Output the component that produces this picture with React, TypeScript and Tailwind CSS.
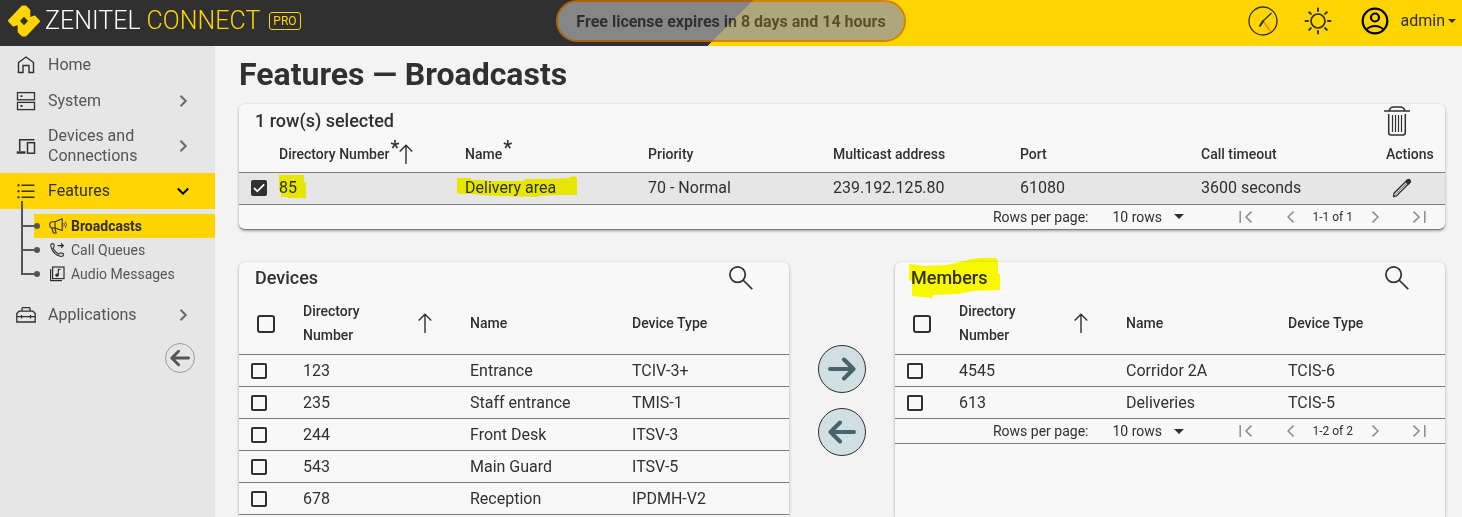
import React from "react";

type IconProps = { className?: string };

function Chevron({ className }: IconProps) {
  return (
    <svg className={className} viewBox="0 0 16 16" fill="none" stroke="currentColor" strokeWidth="2">
      <path d="M5.5 2.8 10.7 8l-5.2 5.2" />
    </svg>
  );
}

function BrandMark() {
  return (
    <svg className="size-8 shrink-0" viewBox="0 0 32 32" fill="#ffd500" fillRule="evenodd" stroke="#ffd500" strokeWidth="2" strokeLinejoin="round" aria-hidden="true">
      <path d="M1 15.800 14.500 1.500H17.500L21.300 5.300V13.500L26.600 11.500 31 16.200 17.500 30.500H14.500L10.700 26.700V18.500L5.400 20.500Z" />
      <path d="M16 11.800 20 16 16 20.200 12 16Z" fill="#303030" stroke="none" />
    </svg>
  );
}

function HomeIcon() {
  return (
    <svg className="size-5" viewBox="0 0 20 20" fill="none" stroke="#303030" strokeWidth="1.4">
      <path d="M2.500 7.500 10 2l7.500 5.500V17.500H13V10.500H7V17.500H2.500Z" />
    </svg>
  );
}

function SystemIcon() {
  return (
    <svg className="size-5" viewBox="0 0 20 20" fill="none" stroke="#303030" strokeWidth="1.3">
      <rect x="1.500" y="1.600" width="17" height="7.200" />
      <rect x="1.500" y="11.400" width="17" height="7.200" />
      <path d="M4.500 5.200h2M4.500 15h2" strokeWidth="1.800" />
    </svg>
  );
}

function DevicesIcon() {
  return (
    <svg className="size-5" viewBox="0 0 20 20" fill="none" stroke="#303030" strokeWidth="1.500">
      <path d="M3.700 15V3.700H18.500" />
      <path d="M.7 16.500H9.500" strokeWidth="2.400" />
      <rect x="11.500" y="6.700" width="7" height="10.500" />
    </svg>
  );
}

function ListIcon() {
  return (
    <svg className="size-5" viewBox="0 0 20 20" fill="none" stroke="#303030" strokeWidth="1.400">
      <path d="M5.500 4.200H18.500M5.500 10.200H18.500M5.500 16.200H18.500" />
      <path d="M1.500 4.200h2M1.500 10.200h2M1.500 16.200h2" strokeWidth="2" />
    </svg>
  );
}

function ToolboxIcon() {
  return (
    <svg className="size-5" viewBox="0 0 20 20" fill="none" stroke="#303030" strokeWidth="1.300">
      <path d="M6 6V3.500Q6 2.700 6.800 2.700H13.200Q14 2.700 14 3.500V6" />
      <path d="M3 6.200H17L19.200 8.600V17H.8V8.600Z" />
      <path d="M.8 11.700H19.200M5.500 10v3.400M14.500 10v3.400" />
    </svg>
  );
}

function MegaphoneIcon() {
  return (
    <svg className="h-4 w-[18px]" viewBox="0 0 18 16" fill="none" stroke="#303030" strokeWidth="1.100" strokeLinejoin="round">
      <path d="M6 3.700H3.200Q.7 4.200.7 6.800T3.200 10H6Z" />
      <path d="M6 3.700 13.200.8V12.600L6 10" />
      <path d="M2.800 10 4.500 15H7.200L5.800 10" />
      <path d="M14.800 5Q16 6.700 14.800 8.500M16.300 3.500Q18.500 6.700 16.300 10" strokeWidth=".8" />
    </svg>
  );
}

function CallQueueIcon() {
  return (
    <svg className="size-4" viewBox="0 0 16 16" fill="none" stroke="#303030" strokeWidth="1.100" strokeLinejoin="round">
      <path d="M2 2.300Q3.300 1 4.900 2.100L5.200 4.500 4 6.300Q6.300 10.300 9.800 12.200L11.300 10.800 14.300 11.600V13.800Q12 15.200 8.500 13.300 4 10.700 2.400 6 1.600 3.500 2 2.300Z" />
      <path d="M8.500 3.700h5.800M12 1.500l2.300 2.200-2.300 2.200" strokeWidth="1.300" />
    </svg>
  );
}

function AudioIcon() {
  return (
    <svg className="size-4" viewBox="0 0 16 16" fill="none" stroke="#303030" strokeWidth="1.200">
      <rect x="3.600" y="1" width="11.400" height="11.600" />
      <path d="M1.600 3V14.600H13" />
      <path d="M9.300 9V3.400H11.500" />
      <circle cx="8" cy="9.200" r="1.400" fill="#303030" strokeWidth=".6" />
    </svg>
  );
}

function SortArrow({ className = "" }: IconProps) {
  return (
    <svg className={`h-5 w-[14px] shrink-0 ${className}`} viewBox="0 0 14 20" fill="none" stroke="#303030" strokeWidth="1.400" aria-label="Sorted ascending">
      <path d="M7 20V1.200M.7 7.500 7 1.200l6.300 6.300" />
    </svg>
  );
}

function BoldArrow({ className = "" }: IconProps) {
  return (
    <svg className={className} viewBox="0 0 28 28" fill="none" stroke="currentColor" strokeWidth="4" strokeLinecap="round" strokeLinejoin="round">
      <path d="M2 14H25M16 4.500 25.500 14 16 23.500" />
    </svg>
  );
}

function SearchIcon() {
  return (
    <svg className="size-6" viewBox="0 0 24 24" fill="none" stroke="#303030" strokeWidth="1.700">
      <circle cx="8.600" cy="8.600" r="7.700" />
      <path d="M14 14 23.200 23.200" />
    </svg>
  );
}

function TrashIcon() {
  return (
    <svg className="h-[30px] w-[26px]" viewBox="0 0 26 30" fill="none" stroke="#303030" strokeWidth="1.500">
      <path d="M0 5H26M5 5Q6 1 10 1H16Q20 1 21 5" />
      <path d="M4.700 8V26.500Q4.700 29 7 29H19Q21.300 29 21.300 26.500V8" />
      <path d="M8.500 9V26M11.500 9V26M14.500 9V26M17.500 9V26" strokeWidth="1.200" />
    </svg>
  );
}

function PencilIcon() {
  return (
    <svg className="size-5" viewBox="0 0 20 20" fill="none" stroke="#303030" strokeWidth="1.300" strokeLinejoin="round">
      <path d="M1.500 18.500 2 15.300 15 2.300 17.500 4.800 4.500 17.900Z" />
      <path d="M14 3.500 15.700 1.700Q16.600 1 17.500 1.800L18.200 2.500Q19 3.400 18.200 4.300L16.500 6Z" fill="#303030" />
      <path d="M3.500 16.300 15 5" strokeWidth=".6" />
    </svg>
  );
}

function PageEdge({ className = "" }: IconProps) {
  return (
    <svg className={`h-3 w-[14px] ${className}`} viewBox="0 0 14 12" fill="none" stroke="currentColor" strokeWidth="1.500">
      <path d="M1.200 0V12M12.500.6 7 6l5.500 5.400" />
    </svg>
  );
}

function PageStep({ className = "" }: IconProps) {
  return (
    <svg className={`h-3 w-[7px] ${className}`} viewBox="0 0 7 12" fill="none" stroke="currentColor" strokeWidth="1.500">
      <path d="M6.500.6 1 6l5.500 5.400" />
    </svg>
  );
}

function Marker({ className, viewBox, points }: { className: string; viewBox: string; points: string }) {
  return (
    <svg className={`pointer-events-none absolute mix-blend-multiply ${className}`} viewBox={viewBox} fill="#ffff00" aria-hidden="true">
      <polygon points={points} />
    </svg>
  );
}

function Check({ label, large = false, checked = false }: { label: string; large?: boolean; checked?: boolean }) {
  return (
    <span className="grid w-fit place-items-center">
      <input
        type="checkbox"
        defaultChecked={checked}
        aria-label={label}
        className={`peer col-start-1 row-start-1 appearance-none border-2 border-[#303030] checked:bg-[#303030] ${
          large ? "size-[18px] rounded-[3px]" : "size-4 rounded-xs"
        }`}
      />
      <svg className="pointer-events-none invisible col-start-1 row-start-1 size-4 peer-checked:visible" viewBox="0 0 16 16" fill="none" stroke="#fff" strokeWidth="1.800">
        <path d="M3 8 6.300 11.300 13.200 4.300" />
      </svg>
    </span>
  );
}

function Pagination({ range }: { range: string }) {
  return (
    <div className="flex h-6 items-center justify-end pr-1 text-sm">
      <label className="flex items-center gap-6">
        Rows per page:
        <span className="grid items-center">
          <select className="col-start-1 row-start-1 w-[72px] appearance-none bg-transparent">
            <option>10 rows</option>
          </select>
          <svg className="pointer-events-none col-start-1 row-start-1 h-[5px] w-[10px] justify-self-end" viewBox="0 0 10 5" fill="#303030">
            <path d="M0 0H10L5 5Z" />
          </svg>
        </span>
      </label>
      <div className="ml-10 flex items-center text-xs">
        <button className="flex w-11 justify-center text-[#8c8c8c]" aria-label="First page"><PageEdge /></button>
        <button className="flex w-11 justify-center text-[#8c8c8c]" aria-label="Previous page"><PageStep /></button>
        <span className="whitespace-nowrap">{range}</span>
        <button className="flex w-11 justify-center text-[#8c8c8c]" aria-label="Next page"><PageStep className="rotate-180" /></button>
        <button className="flex w-11 justify-center text-[#8c8c8c]" aria-label="Last page"><PageEdge className="rotate-180" /></button>
      </div>
    </div>
  );
}

const navRow = "flex min-h-9 w-full items-center gap-3 py-[7px] pr-6 pl-4 text-left leading-5";

function NavItem({ icon, label }: { icon: React.ReactNode; label: string }) {
  return (
    <button className={navRow}>
      {icon}
      <span className="flex-1">{label}</span>
      <Chevron className="size-4 text-[#6a6a6a]" />
    </button>
  );
}

function SubItem({ icon, label, active = false, last = false }: { icon: React.ReactNode; label: string; active?: boolean; last?: boolean }) {
  return (
    <li className="flex h-6 pl-[21px]">
      <span className="flex w-[13px] flex-col" aria-hidden="true">
        <span className="h-[13px] border-b-2 border-l-2 border-[#555]" />
        <span className={last ? "" : "flex-1 border-l-2 border-[#555]"} />
      </span>
      <a href="#" className={`flex flex-1 items-center text-sm ${active ? "bg-[#ffd500] font-bold text-[#303030]" : ""}`}>
        <span className="size-[6px] rounded-full bg-[#555]" />
        <span className="ml-[9px] flex w-[22px]">{icon}</span>
        {label}
      </a>
    </li>
  );
}

function Sidebar() {
  return (
    <nav className="w-[215px] shrink-0 bg-[#e6e6e6] pt-px text-[#555]">
      <a href="#" className={navRow}>
        <HomeIcon />
        Home
      </a>
      <NavItem icon={<SystemIcon />} label="System" />
      <NavItem icon={<DevicesIcon />} label="Devices and Connections" />
      <button className={`${navRow} bg-[#ffd500] text-[#303030]`}>
        <ListIcon />
        <span className="flex-1">Features</span>
        <Chevron className="size-4 rotate-90 text-black" />
      </button>
      <div className="relative pt-[5px]">
        <span className="absolute -top-2 left-[21px] h-[13px] border-l-2 border-[#555]" aria-hidden="true" />
        <ul>
          <SubItem icon={<MegaphoneIcon />} label="Broadcasts" active />
          <SubItem icon={<CallQueueIcon />} label="Call Queues" />
          <SubItem icon={<AudioIcon />} label="Audio Messages" last />
        </ul>
      </div>
      <div className="mt-[11px]">
        <NavItem icon={<ToolboxIcon />} label="Applications" />
      </div>
      <button className="mt-[10px] mr-5 ml-auto flex size-[30px] items-center justify-center rounded-full border border-[#999]" aria-label="Collapse menu">
        <BoldArrow className="size-5 rotate-180" />
      </button>
    </nav>
  );
}

function Header() {
  return (
    <header className="grid h-[46px] shrink-0 grid-cols-[1fr_auto_1fr] items-start bg-[linear-gradient(135deg,#303030_50%,#ffd500_50%)]">
      <div className="flex h-[42px] items-center pl-2">
        <BrandMark />
        <span className="ml-[5px] text-[25px] font-light text-white">ZENITEL</span>
        <span className="ml-[6px] text-[25px] font-light text-[#ffd500]">CONNECT</span>
        <span className="ml-[9px] rounded-[3px] border border-[#ffd500] px-[3px] text-xs leading-4 text-[#ffd500]">PRO</span>
      </div>
      <p className="flex h-[42px] items-center rounded-full border-2 border-[#d06e00] bg-[#9c9c9c] px-[18px] pt-px font-bold opacity-80">
        Free license expires in 8 days and 14 hours
      </p>
      <div className="flex h-[42px] items-center justify-end pr-[6px]">
        <button aria-label="Clock">
          <svg className="size-[30px]" viewBox="0 0 30 30" fill="none" stroke="#303030" strokeWidth="1.300">
            <circle cx="15" cy="15" r="14" />
            <path d="M15 15 22.500 25.500" stroke="#ff7a00" />
            <path d="M14.500 15.500 23.500 7" />
            <path d="M11.500 20.500 15.500 14.500" strokeWidth="2.200" />
          </svg>
        </button>
        <button className="ml-[26px]" aria-label="Theme">
          <svg className="size-7" viewBox="0 0 28 28" fill="none" stroke="#303030" strokeWidth="2" strokeLinecap="round">
            <circle cx="14" cy="14" r="7" strokeWidth="1.700" />
            <path d="M14 1.500V4M14 24v2.500M1.500 14H4M24 14h2.500M5.200 5.200 6.900 6.900M21.100 21.100l1.700 1.700M5.200 22.800 6.900 21.100M21.100 6.900l1.700-1.700" />
          </svg>
        </button>
        <button className="ml-[29px] flex items-center" aria-label="Account menu">
          <svg className="size-7" viewBox="0 0 28 28" fill="none" stroke="#000" strokeWidth="2.200">
            <circle cx="14" cy="14" r="12.300" />
            <circle cx="14" cy="10.500" r="4" />
            <path d="M5.500 22.500Q9 19 14 19T22.500 22.500" />
          </svg>
          <span className="ml-3">admin</span>
          <svg className="ml-[3px] h-1 w-2" viewBox="0 0 8 4" fill="#303030"><path d="M0 0H8L4 4Z" /></svg>
        </button>
      </div>
    </header>
  );
}

const card = "bg-[#f8f8f8] shadow-[0_1px_3px_rgba(0,0,0,0.35)]";
const line = "border-b border-[#7c7c7c]";

function DeviceTable({ title, rows, children, marked = false }: { title: string; rows: string[][]; children?: React.ReactNode; marked?: boolean }) {
  return (
    <section className={`rounded-t-md ${card}`}>
      <div className="flex h-8 items-center justify-between pr-9 pl-4">
        <h2 className="relative text-lg font-medium">
          {title}
          {marked && (
            <Marker
              className="-top-[6px] -left-[2px] h-10 w-[92px]"
              viewBox="0 0 92 40"
              points="0,6 16,8 38,7 50,4 64,1 71,0 87,0 89,3 89,16 91,16 91,32 64,33 49,36 24,37 23,40 3,38 3,23 0,22"
            />
          )}
        </h2>
        <button aria-label={`Search ${title}`}><SearchIcon /></button>
      </div>
      <table className="w-full table-fixed text-left">
        <colgroup>
          <col className="w-[64px]" />
          <col className="w-[167px]" />
          <col className="w-[162px]" />
          <col className="w-[157px]" />
        </colgroup>
        <thead>
          <tr className={`h-[61px] text-sm ${line}`}>
            <th className="pl-[18px]"><Check label={`Select all ${title}`} large /></th>
            <th className="pr-[38px] pb-[2px] font-medium">
              <div className="flex items-center justify-between leading-6">
                <span className="w-24">Directory Number</span>
                <SortArrow />
              </div>
            </th>
            <th className="pb-[2px] font-medium">Name</th>
            <th className="pb-[2px] font-medium">Device Type</th>
          </tr>
        </thead>
        <tbody>
          {rows.map(([id, name, type]) => (
            <tr key={id} className={`h-8 ${line}`}>
              <td className="pl-3"><Check label={`Select ${name}`} /></td>
              <td>{id}</td>
              <td>{name}</td>
              <td>{type}</td>
            </tr>
          ))}
        </tbody>
      </table>
      {children}
    </section>
  );
}

const devices = [
  ["123", "Entrance", "TCIV-3+"],
  ["235", "Staff entrance", "TMIS-1"],
  ["244", "Front Desk", "ITSV-3"],
  ["543", "Main Guard", "ITSV-5"],
  ["678", "Reception", "IPDMH-V2"],
];

const members = [
  ["4545", "Corridor 2A", "TCIS-6"],
  ["613", "Deliveries", "TCIS-5"],
];

function Required() {
  return <span className="-mt-3 ml-px text-xl leading-5">*</span>;
}

function BroadcastTable() {
  return (
    <section className={`rounded-md border-b border-[#7c7c7c] ${card}`}>
      <div className="flex h-[33px] items-center justify-between pr-[35px] pl-4">
        <h2 className="text-lg font-medium">1 row(s) selected</h2>
        <button aria-label="Delete selected"><TrashIcon /></button>
      </div>
      <table className="w-full table-fixed text-left">
        <colgroup>
          <col className="w-[40px]" />
          <col className="w-[186px]" />
          <col className="w-[183px]" />
          <col className="w-[185px]" />
          <col className="w-[187px]" />
          <col className="w-[181px]" />
          <col className="w-[185px]" />
          <col className="w-[59px]" />
        </colgroup>
        <thead>
          <tr className={`h-[35px] text-sm ${line}`}>
            <th />
            <th className="font-medium">
              <span className="flex items-center">Directory Number<Required /><SortArrow /></span>
            </th>
            <th className="font-medium"><span className="flex items-center">Name<Required /></span></th>
            <th className="font-medium">Priority</th>
            <th className="font-medium">Multicast address</th>
            <th className="font-medium">Port</th>
            <th className="font-medium">Call timeout</th>
            <th className="font-medium">Actions</th>
          </tr>
        </thead>
        <tbody>
          <tr className={`h-8 bg-[#e6e6e6] ${line}`}>
            <td className="pl-3"><Check label="Select Delivery area" checked /></td>
            <td>
              <span className="relative">
                85
                <Marker className="-top-[3px] left-0 h-6 w-[28px]" viewBox="0 0 28 24" points="0,0 25,0 25,7 27,7 27,23 9,23 9,22 2,22 2,18 0,15" />
              </span>
            </td>
            <td>
              <span className="relative">
                Delivery area
                <Marker
                  className="-top-[2px] -left-[8px] h-[22px] w-[120px]"
                  viewBox="0 0 120 22"
                  points="0,2 14,2 14,4 30,4 32,5 66,5 68,3 90,3 113,2 113,1 118,0 120,2 120,19 98,19 82,20 80,21 42,20 22,19 20,18 2,18 0,17"
                />
              </span>
            </td>
            <td>70 - Normal</td>
            <td>239.192.125.80</td>
            <td>61080</td>
            <td>3600 seconds</td>
            <td className="pl-[6px]"><button className="block" aria-label="Edit"><PencilIcon /></button></td>
          </tr>
        </tbody>
      </table>
      <Pagination range="1-1 of 1" />
    </section>
  );
}

export default function App() {
  return (
    <div className="flex h-screen flex-col overflow-hidden bg-[#f3f3f3] font-[Roboto,sans-serif] text-base text-[#303030]">
      <Header />
      <div className="flex min-h-0 flex-1">
        <Sidebar />
        <main className="flex min-w-0 flex-1 flex-col overflow-hidden pr-[17px] pl-6">
          <h1 className="pt-2 pb-[10px] text-[32px] leading-10 font-bold">Features — Broadcasts</h1>
          <BroadcastTable />
          <div className="mt-8 grid flex-1 grid-cols-[1fr_106px_1fr]">
            <DeviceTable title="Devices" rows={devices} />
            <div className="flex flex-col items-center gap-[15px] pt-[83px] text-[#45646b]">
              <button className="flex size-12 items-center justify-center rounded-full border border-[#303030] bg-[#d1dee2]" aria-label="Add to members">
                <BoldArrow className="size-7" />
              </button>
              <button className="flex size-12 items-center justify-center rounded-full border border-[#303030] bg-[#d1dee2]" aria-label="Remove from members">
                <BoldArrow className="size-7 rotate-180" />
              </button>
            </div>
            <DeviceTable title="Members" rows={members} marked>
              <div className={line}><Pagination range="1-2 of 2" /></div>
            </DeviceTable>
          </div>
        </main>
      </div>
    </div>
  );
}
